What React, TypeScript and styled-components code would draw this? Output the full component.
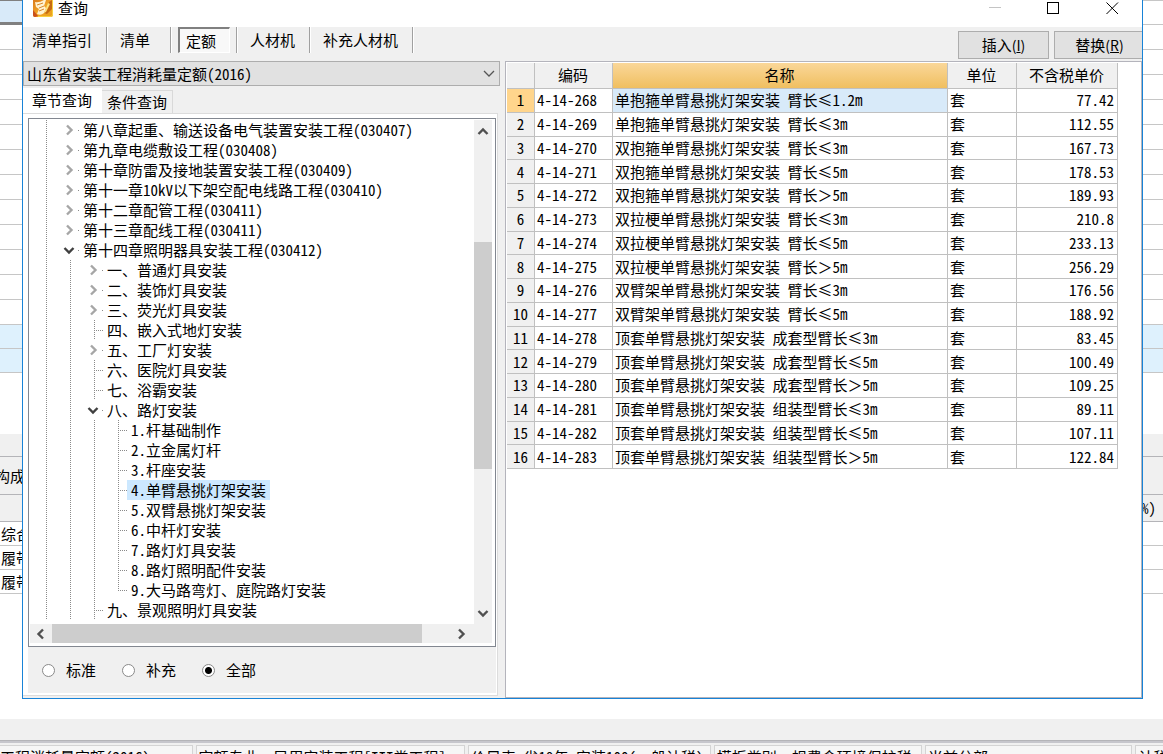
import React from "react";
import styled, { createGlobalStyle, css } from "styled-components";

const GlobalStyle = createGlobalStyle`
  * { box-sizing: border-box; }
  body { margin: 0; background: #fff; }
  body, button, select, input, table {
    font-family: "Noto Sans Mono CJK SC", "Noto Sans CJK SC", monospace;
    font-size: 15px;
    line-height: 20px;
    color: #000;
  }
`;

const line = "#c6c6c6";

/* ---------- main window behind the dialog ---------- */

const Desktop = styled.div`
  position: relative;
  height: 100vh;
  min-height: 754px;
  overflow: hidden;
  background: #fff;
`;

const SheetRow = styled.div<{ $tint?: boolean; $short?: boolean }>`
  display: flex;
  align-items: center;
  height: ${(p) => (p.$short ? 24 : 25)}px;
  padding-left: 1px;
  border-bottom: 1px solid ${line};
  background: ${(p) => (p.$tint ? "#def1fd" : "#fff")};
  white-space: nowrap;
`;

const TopRow = styled(SheetRow)`
  padding: 0;
  border-top: 1px solid ${line};
`;

const CurrentCell = styled.div`
  width: 50%;
  height: 25px;
  background: #d8eaf9;
  border-top: 1px solid #808080;
  border-bottom: 3px solid #808080;
`;

const Gap = styled.div<{ $h: number }>`
  height: ${(p) => p.$h}px;
`;

const Band = styled.div<{ $h: number; $end?: boolean }>`
  display: flex;
  align-items: center;
  justify-content: ${(p) => (p.$end ? "flex-end" : "flex-start")};
  height: ${(p) => p.$h}px;
  padding-right: 7px;
  background: #f0f0f0;
  border-bottom: 1px solid #b4b4b8;
`;

const DetailTab = styled.span`
  margin-left: -5px;
`;

const StatusBar = styled.footer`
  display: flex;
  gap: 3px;
  padding-top: 2px;
  background: #f0f0f0;
  border-top: 2px solid #c6c6cc;
`;

const StatusCell = styled.div<{ $w: number }>`
  flex: ${(p) => p.$w} 0 0;
  height: 26px;
  padding: 1px 0 0 2px;
  border: 1px solid #d4d4d4;
  background: #f6f6f6;
  overflow: hidden;
  white-space: pre;
  &:first-child { padding-left: 0; border-left: 0; }
  &:last-child { border-right: 0; }
`;

/* ---------- dialog frame ---------- */

const Dialog = styled.section`
  position: absolute;
  top: 0;
  left: 22px;
  right: 20px;
  bottom: 55px;
  display: flex;
  flex-direction: column;
  border: 1px solid #1883d7;
  border-top: 0;
  background: #f0f0f0;
  overflow: hidden;
`;

const TitleBar = styled.header`
  display: flex;
  align-items: flex-start;
  justify-content: space-between;
  height: 27px;
  padding: 0 23px 0 10px;
  background: #fff;
`;

const Title = styled.h1`
  display: flex;
  align-items: flex-start;
  gap: 5px;
  margin: 0;
  font-family: "Noto Sans CJK SC", sans-serif;
  font-size: 15px;
  font-weight: 400;
  line-height: 16px;
`;

const WindowButtons = styled.div`
  display: flex;
  gap: 46px;
`;

const WindowButton = styled.button`
  display: block;
  padding: 1px 0 0;
  border: 0;
  background: none;
  svg { display: block; }
`;

const Toolbar = styled.nav`
  display: flex;
  justify-content: space-between;
  height: 34px;
`;

const ToolGroup = styled.div`
  display: flex;
  align-items: flex-start;
`;

const ToolButton = styled.button<{ $pressed?: boolean }>`
  min-width: 52px;
  height: 26px;
  padding: 0 7px;
  margin: 0 1px;
  border: 1px solid transparent;
  background: none;
  text-align: left;
  white-space: nowrap;
  ${(p) =>
    p.$pressed &&
    css`
      margin-left: 3px;
      padding: 0 6px;
      border: solid #fff;
      border-width: 2px 1px 1px 2px;
      border-top-color: #808080;
      border-left-color: #808080;
      background: #f8f8f8;
    `}
`;

const Separator = styled.span`
  width: 2px;
  height: 26px;
  margin: 0 3px 0 5px;
  border-left: 1px solid #a0a0a0;
  border-right: 1px solid #fff;
`;

const Actions = styled.div`
  display: flex;
  gap: 5px;
  padding-top: 4px;
  margin-right: -3px;
`;

const ActionButton = styled.button`
  width: 91px;
  height: 28px;
  padding: 0;
  border: 1px solid #adadad;
  background: #e1e1e1;
`;

const AccessKey = styled.span`
  font-family: "Noto Sans CJK SC", sans-serif;
  font-size: 14px;
`;

const Body = styled.div`
  display: flex;
  flex: 1;
  min-height: 0;
  gap: 4px;
`;

/* ---------- left side ---------- */

const LeftPane = styled.div`
  display: flex;
  flex-direction: column;
  flex: 0 0 478px;
`;

const LibraryBox = styled.div`
  display: grid;
  align-items: center;
  height: 25px;
  svg {
    grid-area: 1 / 1;
    justify-self: end;
    margin-right: 6px;
    pointer-events: none;
  }
`;

const LibrarySelect = styled.select`
  grid-area: 1 / 1;
  appearance: none;
  width: 477px;
  height: 25px;
  padding: 0 24px 0 3px;
  border: 1px solid #adadad;
  border-radius: 0;
  background: #e1e1e1;
`;

const Tabs = styled.div`
  display: flex;
  align-items: flex-end;
  height: 27px;
`;

const Tab = styled.button<{ $active?: boolean }>`
  height: ${(p) => (p.$active ? 25 : 23)}px;
  padding: ${(p) => (p.$active ? "0 9px 2px 8px" : "0 5px")};
  border: 1px solid ${(p) => (p.$active ? "#fff" : "#d9d9d9")};
  border-left-width: ${(p) => (p.$active ? 1 : 0)}px;
  border-bottom: 0;
  background: ${(p) => (p.$active ? "#fff" : "#f0f0f0")};
  white-space: nowrap;
`;

const TabPanel = styled.div`
  display: flex;
  flex-direction: column;
  flex: 1;
  min-height: 0;
  margin: 0 3px 2px 0;
  padding: 4px 1px 2px 5px;
  border: solid #dcdcdc;
  border-width: 1px 1px 1px 0;
  background: #fff;
`;

const TreeBox = styled.div`
  display: grid;
  grid-template-columns: 1fr 21px;
  grid-template-rows: 1fr 22px;
  flex: 1;
  min-height: 0;
  border: 1px solid #828790;
`;

const Tree = styled.ul`
  margin: 0;
  padding: 1px 0 0 5px;
  list-style: none;
  overflow: hidden;
`;

const Node = styled.li`
  display: flex;
  height: 20px;
`;

const dotsDown = "repeating-linear-gradient(#8a8a8a 0 1px, #fff 1px 2px)";
const dotsAcross = "repeating-linear-gradient(90deg, #8a8a8a 0 1px, #fff 1px 2px)";

const Guide = styled.span<{ $kind: GuideKind; $last?: boolean }>`
  display: flex;
  align-items: center;
  flex: 0 0 ${(p) => (p.$last ? 21 : 24)}px;
  padding-left: 5px;
  background-repeat: no-repeat;
  ${(p) =>
    p.$kind === "line" &&
    css`background-image: ${dotsDown}; background-size: 1px 20px; background-position: 12px 0;`}
  ${(p) =>
    p.$kind === "branch" &&
    css`
      background-image: ${dotsDown}, ${dotsAcross};
      background-size: 1px 20px, 10px 1px;
      background-position: 12px 0, 12px 10px;
    `}
  ${(p) =>
    p.$kind === "end" &&
    css`
      background-image: ${dotsDown}, ${dotsAcross};
      background-size: 1px 10px, 10px 1px;
      background-position: 12px 0, 12px 10px;
    `}
  ${(p) =>
    (p.$kind === "closed" || p.$kind === "open") &&
    css`background-image: ${dotsAcross}; background-size: 1px 1px; background-position: 20px 10px;`}
`;

const NodeLabel = styled.span<{ $selected?: boolean }>`
  padding: 0 4px;
  background: ${(p) => (p.$selected ? "#cce8ff" : "transparent")};
  white-space: nowrap;
`;

const VBar = styled.div`
  display: flex;
  flex-direction: column;
  align-items: center;
  width: 18px;
  padding: 6px 0 5px;
  margin-top: 1px;
  background: #f0f0f0;
`;

const VThumb = styled.div`
  width: 18px;
  height: 46%;
  margin: 104px 0 auto;
  background: #cdcdcd;
`;

const HBar = styled.div`
  grid-column: 1 / -1;
  display: flex;
  align-items: center;
  height: 19px;
  padding: 0 25px 0 5px;
  margin: 0 3px 0 1px;
  background: #f0f0f0;
`;

const HThumb = styled.div`
  width: 370px;
  height: 19px;
  margin: 0 auto 0 5px;
  background: #cdcdcd;
`;

const ScrollButton = styled.button`
  display: block;
  padding: 0;
  border: 0;
  background: none;
  svg { display: block; }
`;

const Filters = styled.div`
  display: flex;
  align-items: center;
  height: 46px;
  padding: 0 14px;
  background: #f0f0f0;
`;

const Choice = styled.label`
  display: flex;
  align-items: center;
  gap: 11px;
  width: 80px;
  white-space: nowrap;
`;

const Radio = styled.input`
  appearance: none;
  width: 13px;
  height: 13px;
  margin: 0;
  border: 1px solid #8a8a8a;
  border-radius: 50%;
  background: #fff;
  &:checked {
    background: radial-gradient(circle, #000 0 3px, #fff 4px);
  }
`;

/* ---------- right side ---------- */

const RightPane = styled.div`
  flex: 1;
  min-width: 0;
  padding: 1px 23px 0 1px;
  border: 1px solid #b4b4bc;
  background: #fff;
`;

const Grid = styled.table`
  width: 100%;
  height: 406px;
  table-layout: fixed;
  border-collapse: separate;
  border-spacing: 0;
`;

const cell = css`
  padding: 0 3px 0 2px;
  border: solid #c0c0c0;
  border-width: 0 1px 1px 0;
  line-height: 20px;
  font-weight: 400;
  white-space: pre;
  overflow: hidden;
`;

const HeadCell = styled.th<{ $active?: boolean }>`
  ${cell}
  height: 26px;
  padding-bottom: 1px;
  background: ${(p) => (p.$active ? "linear-gradient(#fad799, #f0bf60)" : "#f0f0f0")};
`;

const IndexCell = styled.th<{ $active?: boolean }>`
  ${cell}
  padding: 0;
  background: ${(p) => (p.$active ? "#ffd58c" : "#f0f0f0")};
`;

const Cell = styled.td<{ $active?: boolean; $right?: boolean }>`
  ${cell}
  text-align: ${(p) => (p.$right ? "right" : "left")};
  background: ${(p) => (p.$active ? "#d8eaf9" : "#fff")};
`;

/* ---------- data ---------- */

type GuideKind = "none" | "line" | "branch" | "end" | "closed" | "open";

const guideCodes: Record<string, GuideKind> = {
  " ": "none",
  "|": "line",
  "+": "branch",
  "`": "end",
  ">": "closed",
  v: "open",
};

const nodes: [string, string][] = [
  ["|>", "第八章起重、输送设备电气装置安装工程(030407)"],
  ["|>", "第九章电缆敷设工程(030408)"],
  ["|>", "第十章防雷及接地装置安装工程(030409)"],
  ["|>", "第十一章10kV以下架空配电线路工程(030410)"],
  ["|>", "第十二章配管工程(030411)"],
  ["|>", "第十三章配线工程(030411)"],
  ["|v", "第十四章照明器具安装工程(030412)"],
  ["||>", "一、普通灯具安装"],
  ["||>", "二、装饰灯具安装"],
  ["||>", "三、荧光灯具安装"],
  ["||+", "四、嵌入式地灯安装"],
  ["||>", "五、工厂灯安装"],
  ["||+", "六、医院灯具安装"],
  ["||+", "七、浴霸安装"],
  ["||v", "八、路灯安装"],
  ["|||+", "1.杆基础制作"],
  ["|||+", "2.立金属灯杆"],
  ["|||+", "3.杆座安装"],
  ["|||+", "4.单臂悬挑灯架安装"],
  ["|||+", "5.双臂悬挑灯架安装"],
  ["|||+", "6.中杆灯安装"],
  ["|||+", "7.路灯灯具安装"],
  ["|||+", "8.路灯照明配件安装"],
  ["|||`", "9.大马路弯灯、庭院路灯安装"],
  ["||+", "九、景观照明灯具安装"],
];

const quotas: [string, string, string][] = [
  ["4-14-268", "单抱箍单臂悬挑灯架安装 臂长≤1.2m", "77.42"],
  ["4-14-269", "单抱箍单臂悬挑灯架安装 臂长≤3m", "112.55"],
  ["4-14-270", "双抱箍单臂悬挑灯架安装 臂长≤3m", "167.73"],
  ["4-14-271", "双抱箍单臂悬挑灯架安装 臂长≤5m", "178.53"],
  ["4-14-272", "双抱箍单臂悬挑灯架安装 臂长＞5m", "189.93"],
  ["4-14-273", "双拉梗单臂悬挑灯架安装 臂长≤3m", "210.8"],
  ["4-14-274", "双拉梗单臂悬挑灯架安装 臂长≤5m", "233.13"],
  ["4-14-275", "双拉梗单臂悬挑灯架安装 臂长＞5m", "256.29"],
  ["4-14-276", "双臂架单臂悬挑灯架安装 臂长≤3m", "176.56"],
  ["4-14-277", "双臂架单臂悬挑灯架安装 臂长≤5m", "188.92"],
  ["4-14-278", "顶套单臂悬挑灯架安装 成套型臂长≤3m", "83.45"],
  ["4-14-279", "顶套单臂悬挑灯架安装 成套型臂长≤5m", "100.49"],
  ["4-14-280", "顶套单臂悬挑灯架安装 成套型臂长＞5m", "109.25"],
  ["4-14-281", "顶套单臂悬挑灯架安装 组装型臂长≤3m", "89.11"],
  ["4-14-282", "顶套单臂悬挑灯架安装 组装型臂长≤5m", "107.11"],
  ["4-14-283", "顶套单臂悬挑灯架安装 组装型臂长＞5m", "122.84"],
];

const tools = ["清单指引", "清单", "定额", "人材机", "补充人材机"];

/* ---------- drawings ---------- */

const turns = { right: 0, down: 90, left: 180, up: 270 };

const Arrow = ({ dir, color = "#505050" }: { dir: keyof typeof turns; color?: string }) => (
  <svg width="12" height="12" viewBox="0 0 12 12" aria-hidden="true">
    <path
      d="M4 1.500 L8.500 6 L4 10.500"
      fill="none"
      stroke={color}
      strokeWidth="2.4"
      transform={`rotate(${turns[dir]} 6 6)`}
    />
  </svg>
);

const AppIcon = () => (
  <svg width="20" height="17" viewBox="0 0 20 17" aria-hidden="true">
    <defs>
      <linearGradient id="gold" x1="0" y1="0" x2="1" y2="1">
        <stop offset="0" stopColor="#d97a1c" />
        <stop offset="0.5" stopColor="#f2a526" />
        <stop offset="1" stopColor="#e9a01c" />
      </linearGradient>
    </defs>
    <path d="M0 0 H20 V15 Q20 17 18 17 H2 Q0 17 0 15 Z" fill="url(#gold)" />
    <path d="M0 10 L5 16 L2 17 Q0 17 0 15 Z" fill="#c9501c" />
    <path d="M11 13 L16 2 L19 0 V9 L14 14 Z" fill="#c66a12" />
    <path d="M15 3 L17 4 L13 12 L11 13 Z" fill="#ffe37a" />
    <path d="M2 2 Q6 3 11 0 H13 L11 6 L13 8 L11 13 Q8 16 4 14 L6 9 L3 7 Z" fill="#fff3d2" />
    <path d="M4 5 L10 3 M6 8 L11 6 M6 11 L11 9" stroke="#d8892c" strokeWidth="1" />
    <path d="M19.5 0 V15 Q19 16.500 18 16.500 H5" fill="none" stroke="#f8d040" />
  </svg>
);

export default function App() {
  return (
    <>
      <GlobalStyle />
      <Desktop>
        <TopRow>
          <CurrentCell />
        </TopRow>
        {Array.from({ length: 12 }, (_, i) => (
          <SheetRow key={i} />
        ))}
        <SheetRow $short $tint />
        <SheetRow $short $tint />
        <Gap $h={61} />
        <Band $h={23} />
        <Band $h={38}>
          <DetailTab>构成</DetailTab>
        </Band>
        <Band $h={27} $end>%)</Band>
        <SheetRow $short>综合</SheetRow>
        <SheetRow $short>履带</SheetRow>
        <SheetRow $short>履带</SheetRow>
        <Gap $h={125} />
        <Band $h={22} />
        <StatusBar>
          <StatusCell $w={195}>工程消耗量定额(2016)</StatusCell>
          <StatusCell $w={270}>定额专业: 民用安装工程[III类工程]</StatusCell>
          <StatusCell $w={243}>价目表:省19年 安装100(一般计税)</StatusCell>
          <StatusCell $w={208}>模板类别: 规费含环境保护税</StatusCell>
          <StatusCell $w={207}>当前分部:</StatusCell>
          <StatusCell $w={25}>计税</StatusCell>
        </StatusBar>

        <Dialog role="dialog" aria-labelledby="dialog-title">
          <TitleBar>
            <Title id="dialog-title">
              <AppIcon />
              查询
            </Title>
            <WindowButtons>
              <WindowButton aria-label="最小化">
                <svg width="13" height="14" viewBox="0 0 13 14">
                  <path d="M1 6.500 H13" stroke="#c4c4c4" />
                </svg>
              </WindowButton>
              <WindowButton aria-label="最大化">
                <svg width="13" height="14" viewBox="0 0 13 14">
                  <rect x="0.500" y="1.500" width="11" height="11" fill="none" stroke="#000" />
                </svg>
              </WindowButton>
              <WindowButton aria-label="关闭">
                <svg width="13" height="14" viewBox="0 0 13 14">
                  <path d="M0.500 1.500 L12 13 M12 1.500 L0.500 13" stroke="#000" />
                </svg>
              </WindowButton>
            </WindowButtons>
          </TitleBar>

          <Toolbar>
            <ToolGroup>
              {tools.map((name) => (
                <React.Fragment key={name}>
                  <ToolButton $pressed={name === "定额"}>{name}</ToolButton>
                  <Separator />
                </React.Fragment>
              ))}
            </ToolGroup>
            <Actions>
              <ActionButton>
                插入<AccessKey>(<u>I</u>)</AccessKey>
              </ActionButton>
              <ActionButton>
                替换<AccessKey>(<u>R</u>)</AccessKey>
              </ActionButton>
            </Actions>
          </Toolbar>

          <Body>
            <LeftPane>
              <LibraryBox>
                <LibrarySelect aria-label="定额库">
                  <option>山东省安装工程消耗量定额(2016)</option>
                </LibrarySelect>
                <svg width="12" height="8" viewBox="0 0 12 8" aria-hidden="true">
                  <path d="M1 1 L6 6 L11 1" fill="none" stroke="#555" strokeWidth="1.300" />
                </svg>
              </LibraryBox>
              <Tabs role="tablist">
                <Tab role="tab" $active>章节查询</Tab>
                <Tab role="tab">条件查询</Tab>
              </Tabs>
              <TabPanel>
                <TreeBox>
                  <Tree>
                    {nodes.map(([guides, label]) => (
                      <Node key={label}>
                        {guides.split("").map((code, i) => (
                          <Guide key={i} $kind={guideCodes[code]} $last={i === guides.length - 1}>
                            {code === ">" && <Arrow dir="right" color="#a6a6a6" />}
                            {code === "v" && <Arrow dir="down" color="#404040" />}
                          </Guide>
                        ))}
                        <NodeLabel $selected={label.startsWith("4.")}>{label}</NodeLabel>
                      </Node>
                    ))}
                  </Tree>
                  <VBar>
                    <ScrollButton aria-label="向上"><Arrow dir="up" /></ScrollButton>
                    <VThumb />
                    <ScrollButton aria-label="向下"><Arrow dir="down" /></ScrollButton>
                  </VBar>
                  <HBar>
                    <ScrollButton aria-label="向左"><Arrow dir="left" /></ScrollButton>
                    <HThumb />
                    <ScrollButton aria-label="向右"><Arrow dir="right" /></ScrollButton>
                  </HBar>
                </TreeBox>
                <Filters role="radiogroup" aria-label="范围">
                  {["标准", "补充", "全部"].map((name) => (
                    <Choice key={name}>
                      <Radio type="radio" name="scope" defaultChecked={name === "全部"} />
                      {name}
                    </Choice>
                  ))}
                </Filters>
              </TabPanel>
            </LeftPane>

            <RightPane>
              <Grid>
                <colgroup>
                  <col style={{ width: 28 }} />
                  <col style={{ width: 78 }} />
                  <col />
                  <col style={{ width: 69 }} />
                  <col style={{ width: 101 }} />
                </colgroup>
                <thead>
                  <tr>
                    <HeadCell />
                    <HeadCell>编码</HeadCell>
                    <HeadCell $active>名称</HeadCell>
                    <HeadCell>单位</HeadCell>
                    <HeadCell>不含税单价</HeadCell>
                  </tr>
                </thead>
                <tbody>
                  {quotas.map(([code, name, price], i) => (
                    <tr key={code}>
                      <IndexCell $active={i === 0}>{i + 1}</IndexCell>
                      <Cell>{code}</Cell>
                      <Cell $active={i === 0}>{name}</Cell>
                      <Cell>套</Cell>
                      <Cell $right>{price}</Cell>
                    </tr>
                  ))}
                </tbody>
              </Grid>
            </RightPane>
          </Body>
        </Dialog>
      </Desktop>
    </>
  );
}
